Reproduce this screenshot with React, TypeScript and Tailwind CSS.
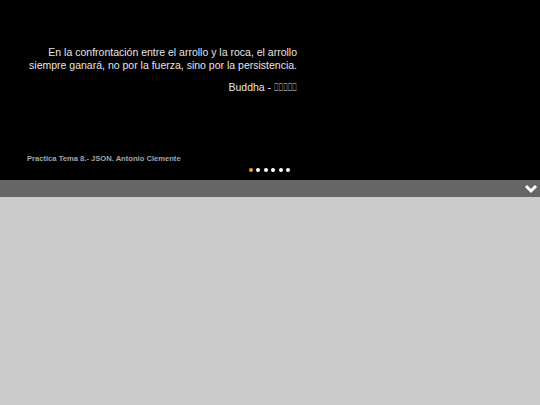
export default function App() {
  const dots = [0, 1, 2, 3, 4, 5];

  return (
    <div className="w-[540px] h-[405px] bg-[#cccccc] font-['Liberation_Sans',Arial,sans-serif] overflow-hidden">
      {/* slider */}
      <div className="h-[180px] bg-black flex flex-col">
        <div className="w-[297px] pt-[46px] text-right text-[10.5px] leading-[13px] text-[#e6e6e6]">
          <p>
            En la confrontación entre el arrollo y la roca, el arrollo
            <br />
            siempre ganará, no por la fuerza, sino por la persistencia.
          </p>
          <p className="mt-[9px]">
            Buddha -{" "}
            <span className="inline-block w-[23px] overflow-visible whitespace-nowrap">
              <span className="inline-block origin-left scale-x-[0.58]">
                {"\uE000\uE001\uE002\uE003\uE004"}
              </span>
            </span>
          </p>
        </div>
        <div className="mt-auto pl-[27px] text-[7.6px] leading-[10px] font-bold text-[#a6a6a6]">
          Practica Tema 8.- JSON. Antonio Clemente
        </div>
        <div className="flex justify-center gap-[3.5px] mt-[4px] mb-[8px] w-[539px]">
          {dots.map((d) => (
            <span
              key={d}
              className={
                d === 0
                  ? "w-[4px] h-[4px] rounded-full bg-[#f0a030]"
                  : "w-[4px] h-[4px] rounded-full bg-white"
              }
            />
          ))}
        </div>
      </div>

      {/* toggle bar */}
      <div className="h-[17px] bg-[#666666] flex items-center justify-end pr-[2px]">
        <svg width="14" height="10" viewBox="0 0 14 10">
          <path d="M2 2 L7 7 L12 2" fill="none" stroke="white" strokeWidth="3" />
        </svg>
      </div>
    </div>
  );
}
